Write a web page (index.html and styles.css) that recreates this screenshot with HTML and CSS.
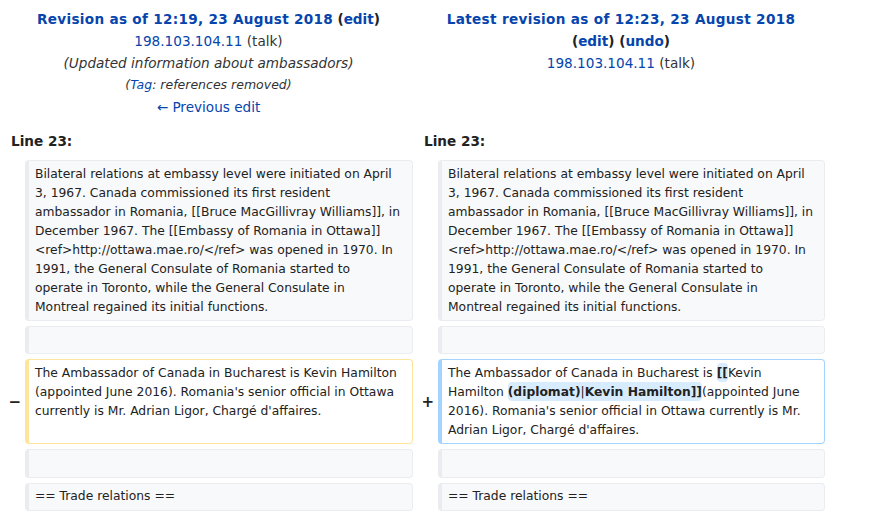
FILE: index.html
```html
<!DOCTYPE html>
<html>
<head>
<meta charset="utf-8">
<link rel="stylesheet" href="styles.css">
</head>
<body>
<div class="diff">
  <div class="title">
    <div class="line"><a class="strong wide" href="#">Revision as of 12:19, 23 August 2018</a> <span class="strong">(<a href="#">edit</a>)</span></div>
    <div class="line"><a href="#">198.103.104.11</a> <span class="talk">(talk)</span></div>
    <div class="line"><i class="summary">(Updated information about ambassadors)</i></div>
    <div class="line tags"><i>(<a href="#">Tag</a>: references removed)</i></div>
    <div class="line"><a href="#">← Previous edit</a></div>
  </div>
  <div class="title">
    <div class="line"><a class="strong wide2" href="#">Latest revision as of 12:23, 23 August 2018</a></div>
    <div class="line"><span class="strong">(<a href="#">edit</a>) (<a href="#">undo</a>)</span></div>
    <div class="line"><a href="#">198.103.104.11</a> <span class="talk">(talk)</span></div>
  </div>

  <div class="lineno">Line 23:</div>
  <div class="lineno">Line 23:</div>

  <div class="marker"></div>
  <div class="cell context">Bilateral relations at embassy level were initiated on April<br>3, 1967. Canada commissioned its first resident<br>ambassador in Romania, [[Bruce MacGillivray Williams]], in<br>December 1967. The [[Embassy of Romania in Ottawa]]<br>&lt;ref&gt;http://ottawa.mae.ro/&lt;/ref&gt; was opened in 1970. In<br>1991, the General Consulate of Romania started to<br>operate in Toronto, while the General Consulate in<br>Montreal regained its initial functions.</div>
  <div class="marker"></div>
  <div class="cell context">Bilateral relations at embassy level were initiated on April<br>3, 1967. Canada commissioned its first resident<br>ambassador in Romania, [[Bruce MacGillivray Williams]], in<br>December 1967. The [[Embassy of Romania in Ottawa]]<br>&lt;ref&gt;http://ottawa.mae.ro/&lt;/ref&gt; was opened in 1970. In<br>1991, the General Consulate of Romania started to<br>operate in Toronto, while the General Consulate in<br>Montreal regained its initial functions.</div>

  <div class="marker"></div>
  <div class="cell context empty"><br></div>
  <div class="marker"></div>
  <div class="cell context empty"><br></div>

  <div class="marker">−</div>
  <div class="cell deleted">The Ambassador of Canada in Bucharest is Kevin Hamilton<br>(appointed June 2016). Romania's senior official in Ottawa<br>currently is Mr. Adrian Ligor, Chargé d'affaires.</div>
  <div class="marker">+</div>
  <div class="cell added">The Ambassador of Canada in Bucharest is <ins class="change">[[</ins>Kevin<br>Hamilton <ins class="change">(diplomat)<span class="thin">|</span>Kevin Hamilton]]</ins>(appointed June<br>2016). Romania's senior official in Ottawa currently is Mr.<br>Adrian Ligor, Chargé d'affaires.</div>

  <div class="marker"></div>
  <div class="cell context empty"><br></div>
  <div class="marker"></div>
  <div class="cell context empty"><br></div>

  <div class="marker"></div>
  <div class="cell context">== Trade relations ==</div>
  <div class="marker"></div>
  <div class="cell context">== Trade relations ==</div>
</div>
</body>
</html>
```

FILE: styles.css
```css
html, body {
  margin: 0;
  padding: 0;
  background: #fff;
}
body {
  font-family: "DejaVu Sans", sans-serif;
  color: #222;
  padding: 8px 0 0 4px;
}
a {
  color: #0645ad;
  text-decoration: none;
}
.diff {
  display: grid;
  grid-template-columns: 17px 388px 17px 387px;
  column-gap: 4px;
  row-gap: 5px;
  align-items: center;
}
.title {
  grid-column: span 2;
  align-self: start;
  text-align: center;
  font-size: 13.6px;
  line-height: 22px;
}
.strong {
  font-weight: bold;
}
.wide {
  letter-spacing: 0.3px;
}
.wide2 {
  letter-spacing: 0.33px;
}
.talk {
  color: #333;
}
.summary {
  color: #333;
}
.tags {
  font-size: 12.5px;
  color: #333;
}
.lineno {
  grid-column: span 2;
  font-size: 13.6px;
  font-weight: bold;
  line-height: 22px;
  padding: 7px 7px 3px;
}
.marker {
  text-align: right;
  font-weight: bold;
  font-size: 15px;
  line-height: 1.2;
}
.cell {
  align-self: stretch;
  font-size: 12.32px;
  line-height: 19px;
  padding: 3.5px 6px;
  border: 1px solid #eaecf0;
  border-left-width: 4px;
  border-radius: 4px;
  white-space: nowrap;
}
.empty {
  min-height: 19.4px;
}
.context {
  background: #f8f9fa;
}
.deleted {
  border-color: #ffe49c;
  background: #fff;
}
.added {
  border-color: #a3d3ff;
  background: #fff;
}
.change {
  text-decoration: none;
  font-weight: bold;
  background: #d8ecff;
  border-radius: 4px;
  padding: 2.5px 0;
}
.thin {
  font-weight: normal;
}
```
